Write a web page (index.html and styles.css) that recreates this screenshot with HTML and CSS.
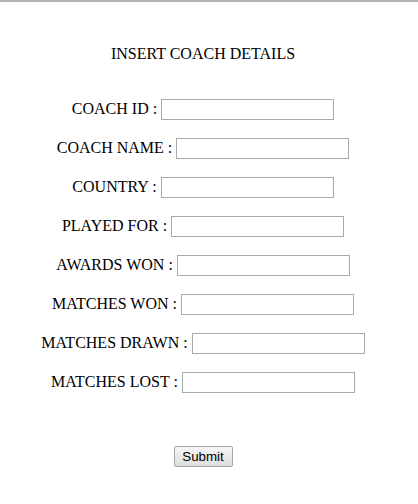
FILE: index.html
```html
<!DOCTYPE html>
<html>
<head>
<meta charset="utf-8">
<link rel="stylesheet" href="styles.css">
</head>
<body>
<div class="page">
  <h1 class="title">INSERT COACH DETAILS</h1>
  <form class="form">
    <div class="row"><label>COACH ID : </label><input type="text" class="field"></div>
    <div class="row"><label>COACH NAME : </label><input type="text" class="field"></div>
    <div class="row"><label>COUNTRY : </label><input type="text" class="field"></div>
    <div class="row"><label>PLAYED FOR : </label><input type="text" class="field"></div>
    <div class="row"><label>AWARDS WON : </label><input type="text" class="field"></div>
    <div class="row"><label>MATCHES WON : </label><input type="text" class="field"></div>
    <div class="row"><label>MATCHES DRAWN : </label><input type="text" class="field"></div>
    <div class="row"><label>MATCHES LOST : </label><input type="text" class="field"></div>
    <div class="actions"><button type="button" class="submit">Submit</button></div>
  </form>
</div>
</body>
</html>
```
FILE: styles.css
```css
html, body {
  margin: 0;
  padding: 0;
  background: #ffffff;
}
body {
  border-top: 2px solid #b4b4b4;
  font-family: "Liberation Serif", "Times New Roman", serif;
  font-size: 16px;
  color: #000;
}
.page {
  width: 406px;
  text-align: center;
}
.title {
  font-size: 16px;
  font-weight: normal;
  margin: 0;
  padding-top: 43px;
  line-height: 18px;
}
.form {
  display: flex;
  flex-direction: column;
  align-items: center;
  gap: 18px;
  padding-top: 36px;
}
.row {
  display: flex;
  align-items: center;
  height: 21px;
}
.row label {
  white-space: pre;
  line-height: 18px;
  padding-bottom: 1px;
}
.field {
  box-sizing: border-box;
  width: 173px;
  height: 21px;
  margin: 0;
  border: 1px solid #a9a9a9;
  padding: 1px 2px;
  background: #fff;
  font-family: "Liberation Sans", Arial, sans-serif;
  font-size: 13px;
}
.actions {
  margin-top: 35px;
}
.submit {
  box-sizing: border-box;
  width: 59px;
  height: 21px;
  padding: 0 6px;
  font-family: "Liberation Sans", Arial, sans-serif;
  font-size: 13.33px;
  color: #000;
  border: 1px solid #a6a6a6;
  border-radius: 2px;
  background: linear-gradient(#f6f6f6, #dedede);
}
```
